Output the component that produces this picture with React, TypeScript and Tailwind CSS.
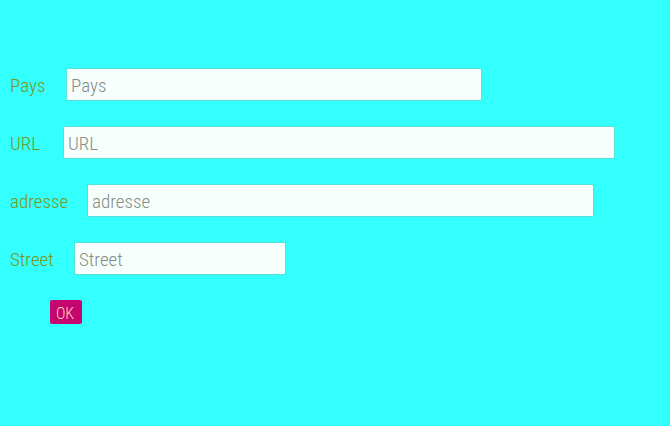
const fields = [
  { id: "pays", label: "Pays", labelWidth: "w-9", width: "w-[416px]" },
  { id: "url", label: "URL", labelWidth: "w-[33px]", width: "w-[552px]" },
  { id: "adresse", label: "adresse", labelWidth: "w-[57px]", width: "w-[507px]" },
  { id: "street", label: "Street", labelWidth: "w-11", width: "w-[212px]" },
];

export default function App() {
  return (
    <main className="min-h-screen bg-[#33fffc] px-2.5 pt-17 font-['Roboto_Condensed','Roboto',sans-serif] font-[330]">
      <form onSubmit={(e) => e.preventDefault()}>
        <div className="flex flex-col gap-[25px]">
          {fields.map((f) => (
            <div key={f.id} className="flex items-center gap-5">
              <label
                htmlFor={f.id}
                className={`${f.labelWidth} shrink-0 pt-0.5 text-[19px] leading-[30px] whitespace-nowrap text-[#7f9322]`}
              >
                {f.label}
              </label>
              <input
                id={f.id}
                type="text"
                placeholder={f.label}
                className={`${f.width} h-[33px] min-w-0 rounded-xs border border-[#5cdcd6] bg-[#f6fffb] px-1 pt-0.5 text-[19px] leading-[30px] text-[#555] placeholder:text-[#868c88]`}
              />
            </div>
          ))}
        </div>
        <button
          type="submit"
          className="mt-[25px] ml-10 block h-6 w-8 rounded-xs bg-[#c4066f] pt-1 pr-0.5 text-center text-[16px] leading-5 text-[#fbd9b4]"
        >
          OK
        </button>
      </form>
    </main>
  );
}
